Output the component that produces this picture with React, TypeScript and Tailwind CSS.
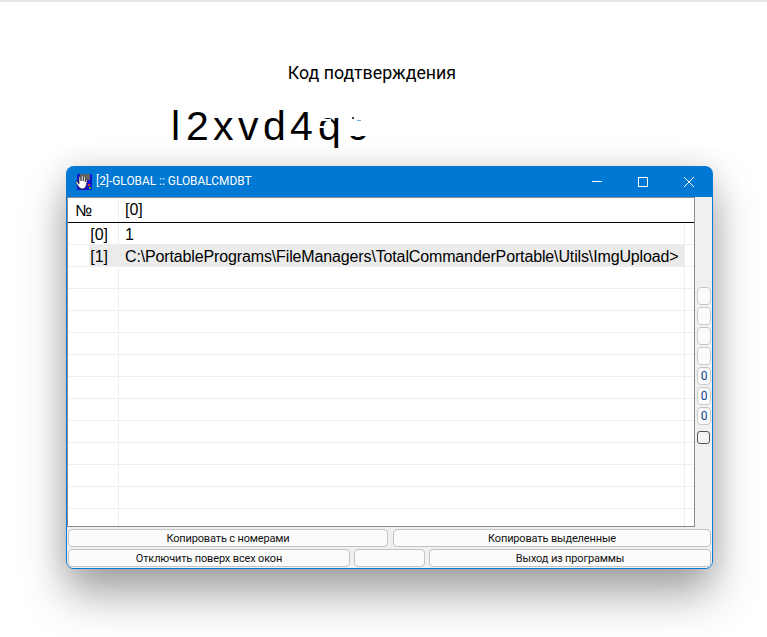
const rows = [
  { no: "[0]", value: "1" },
  { no: "[1]", value: "C:\\PortablePrograms\\FileManagers\\TotalCommanderPortable\\Utils\\ImgUpload>" },
  ...Array.from({ length: 12 }, () => ({ no: "", value: "" })),
];

const sideButtons = ["", "", "", "", "0", "0", "0"];

const HandIcon = () => (
  <svg width="18" height="18" viewBox="0 0 18 18">
    <rect x="2" y="1" width="15" height="16" rx="1" fill="#1414c8" />
    <rect x="5" y="1" width="10" height="6" fill="#666" />
    <rect x="13" y="11" width="2" height="2" fill="#e03030" />
    <rect x="14" y="14" width="2" height="2" fill="#30c030" />
    <path
      d="M2 8.5 L4 11 L4 4 Q5 3 5.7 4 L6 8 L6.3 2.5 Q7.3 1.8 8 2.5 L8.2 8 L9 3 Q10 2.5 10.5 3.2 L10.2 9 L11.3 6 Q12.4 5.8 12.3 7 L11.5 12 Q10.5 16 7 16 Q4.5 16 3.2 13 L0.8 9.5 Q1 8 2 8.5 Z"
      fill="#fff"
      stroke="#222"
      strokeWidth="0.7"
    />
  </svg>
);

const WinButton = ({ label, className }: { label?: string; className: string }) => (
  <div
    className={`flex h-[18px] items-center justify-center rounded-[4px] border border-[#c4c4c4] bg-[#fbfbfb] text-[11px] leading-none tracking-[-0.15px] text-[#111] ${className}`}
  >
    {label}
  </div>
);

export default function App() {
  return (
    <div
      className="h-[637px] w-[767px] overflow-hidden border-t-2 border-[#e6e6e6] bg-white text-black"
      style={{ fontFamily: "Roboto, 'Liberation Sans', sans-serif" }}
    >
      <div className="pr-[23px] pt-[60px] text-center text-[17.8px] leading-[22px]">Код подтверждения</div>

      {/* captcha, the last letters are partly wiped out */}
      <div className="relative ml-[171px] mt-[18px] flex h-[48px] font-['Liberation_Sans',sans-serif] text-[41px] leading-[48px]">
        <span className="w-[15px]">l</span>
        <span className="w-[27px]">2</span>
        <span className="w-[25px]">x</span>
        <span className="w-[25px]">v</span>
        <span className="w-[27px]">d</span>
        <span className="w-[28px]">4</span>
        <span className="w-[29px]">q</span>
        <span>c</span>
        <div className="absolute left-[146px] top-[8px] h-[8px] w-[30px] bg-white" />
        <div className="absolute left-[146px] top-[17px] h-[2px] w-[14px] bg-white" />
        <div className="absolute left-[146px] top-[24px] h-[2px] w-[14px] bg-white" />
        <div className="absolute left-[176px] top-[8px] h-[26px] w-[30px] bg-white" />
        <div className="absolute left-[181px] top-[15px] h-[2px] w-[2px] bg-[#444]" />
        <div className="absolute left-[186px] top-[18px] h-px w-[4px] bg-[#7aa7d8]" />
      </div>

      <div className="ml-[66px] mt-[16px] flex h-[403px] w-[647px] flex-col overflow-hidden rounded-[8px] bg-[#0078d4] shadow-[0_26px_44px_rgba(0,0,0,0.34),0_0_30px_rgba(0,0,0,0.12)]">
        <div className="flex h-[31px] shrink-0 items-center text-white">
          <div className="ml-[9px] mr-[3px] flex w-[18px]">
            <HandIcon />
          </div>
          <span className="text-[11.9px]">[2]-GLOBAL :: GLOBALCMDBT</span>
          <div className="ml-auto mr-[1px] flex items-center">
            <div className="flex h-[31px] w-[46px] items-center justify-center">
              <div className="h-px w-[10px] bg-white" />
            </div>
            <div className="flex h-[31px] w-[46px] items-center justify-center">
              <div className="h-[10px] w-[10px] border border-white" />
            </div>
            <div className="flex h-[31px] w-[46px] items-center justify-center">
              <svg width="12" height="12" viewBox="0 0 12 12" stroke="#fff" strokeWidth="1">
                <path d="M1 1 L11 11 M11 1 L1 11" />
              </svg>
            </div>
          </div>
        </div>

        <div className="mx-[1px] mb-[1px] flex min-h-0 flex-1 flex-col rounded-b-[6px] bg-[#f0f0f0]">
          <div className="flex h-[330px] shrink-0">
            <div className="h-[330px] w-[628px] shrink-0 overflow-hidden border border-[#8b8b93] bg-white font-['Liberation_Sans',sans-serif] text-[16px]">
              <div className="flex h-[25px] items-center border-b border-black">
                <div className="h-full w-[51px] shrink-0 border-r border-[#eeeeee] pl-[7px] leading-[26px]">№</div>
                <div className="pl-[6px] leading-[26px]">[0]</div>
              </div>
              {rows.map((row, i) => (
                <div key={i} className="flex h-[22px] border-b border-[#eeeeee]">
                  <div className="flex w-[51px] shrink-0 justify-end border-r border-[#eeeeee] text-right leading-[23px]">
                    <span className={`w-[29px] pr-[10px] ${i === 1 ? "bg-[#ebebeb]" : ""}`}>{row.no}</span>
                  </div>
                  <div
                    className={`w-[566px] shrink-0 whitespace-nowrap border-r border-[#eeeeee] pl-[6px] leading-[23px] tracking-[-0.137px] ${
                      i === 1 ? "bg-[#ebebeb]" : ""
                    }`}
                  >
                    {row.value}
                  </div>
                </div>
              ))}
            </div>

            <div className="ml-[2px] flex w-[14px] flex-col gap-[2px] pt-[90px]">
              {sideButtons.map((label, i) => (
                <div
                  key={i}
                  className="flex h-[18px] w-[14px] items-center justify-center rounded-[4px] border border-[#c8c8c8] bg-[#fbfbfb] text-[12px] text-[#0a3f8f]"
                >
                  {label}
                </div>
              ))}
              <div className="mt-[4px] h-[13px] w-[13px] rounded-[3px] border border-[#555] bg-[#f4f4f4]" />
            </div>
          </div>

          <div className="ml-[1px] mt-[2px] flex gap-[5px]">
            <WinButton label="Копировать с номерами" className="w-[320px]" />
            <WinButton label="Копировать выделенные" className="w-[318px]" />
          </div>
          <div className="ml-[1px] mt-[2px] flex gap-[4px]">
            <WinButton label="Отключить поверх всех окон" className="w-[282px]" />
            <WinButton className="w-[71px]" />
            <WinButton label="Выход из программы" className="w-[282px]" />
          </div>
        </div>
      </div>
    </div>
  );
}
